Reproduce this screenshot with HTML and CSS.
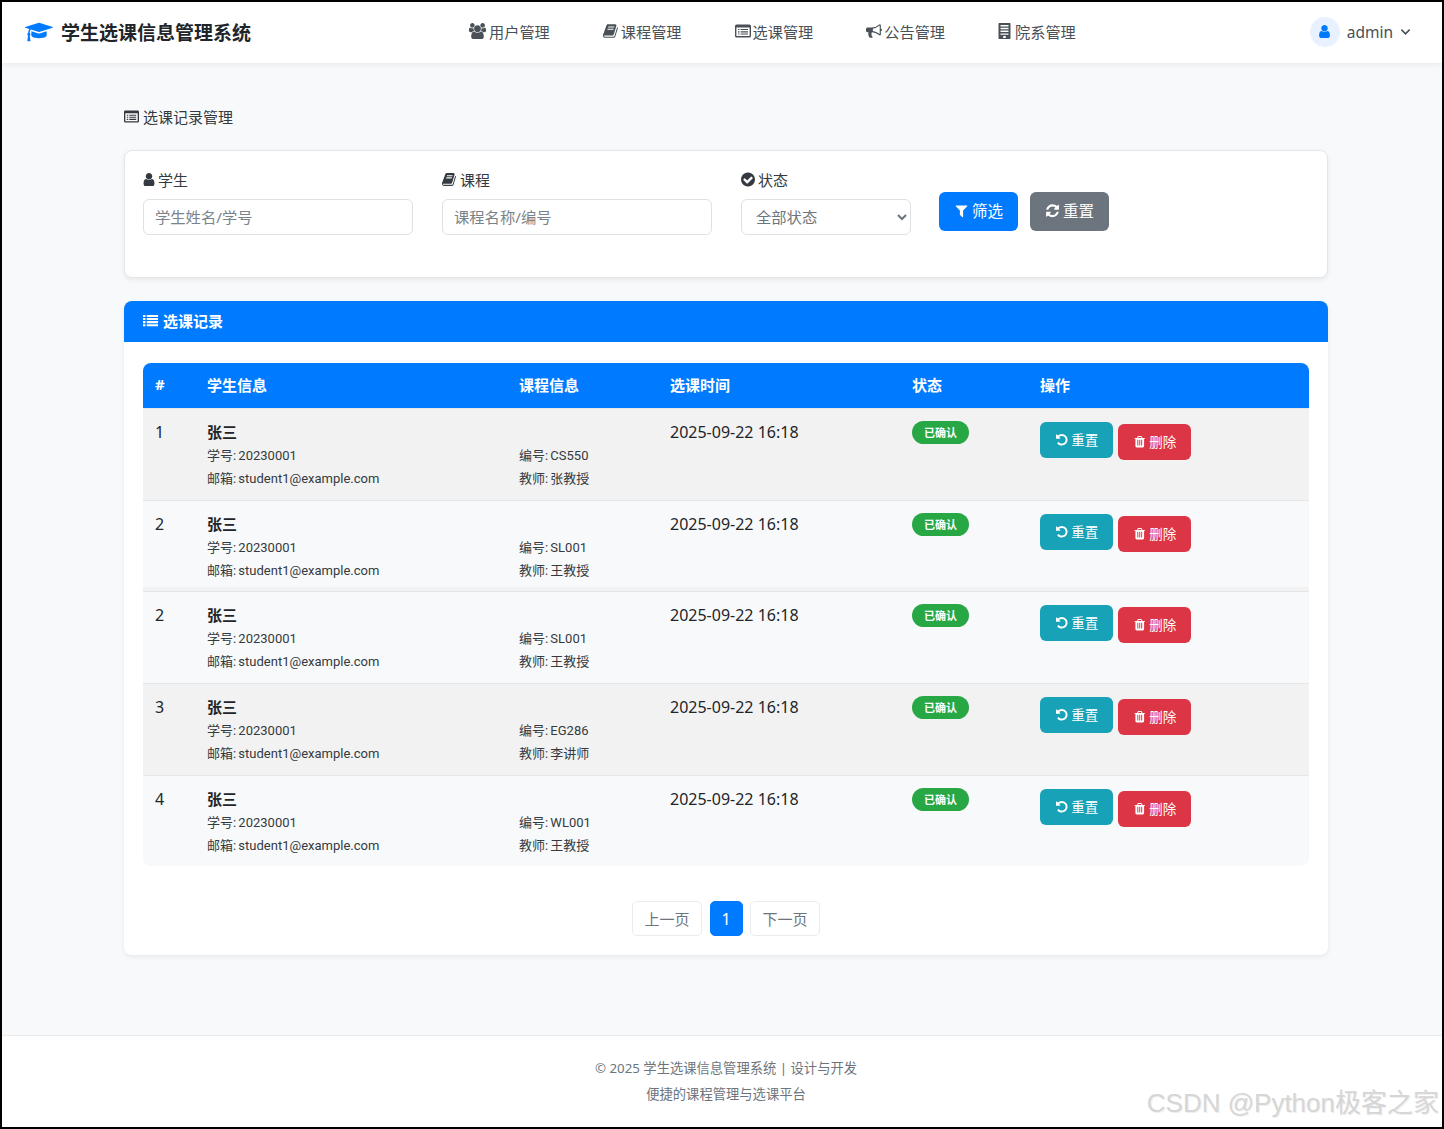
FILE: index.html
```html
<!DOCTYPE html>
<html lang="zh-CN">
<head>
    <meta charset="UTF-8">
    <title>学生选课信息管理系统</title>
    <link rel="stylesheet" href="styles.css">
</head>
<body>
    <!-- icon set, reused below with <use> -->
    <svg class="sprite" aria-hidden="true">
        <symbol id="i-cap" viewBox="0 0 2304 1792"><path d="M1774 836l18 316q4 69-82 128t-235 93.5-323 34.5-323-34.5-235-93.5-82-128l18-316 574 181q22 7 48 7t48-7zm530-324q0 23-22 31l-1120 352q-4 1-10 1t-10-1l-652-206q-43 34-71 111.5t-34 178.5q63 36 63 109 0 69-58 107l58 433q2 14-8 25-9 11-24 11h-192q-15 0-24-11-10-11-8-25l58-433q-58-38-58-107 0-73 65-111 11-207 98-330l-333-104q-22-8-22-31t22-31l1120-352q4-1 10-1t10 1l1120 352q22 8 22 31z"/></symbol>
        <symbol id="i-users" viewBox="0 0 1920 1792"><path d="M593 896q-162 5-265 128h-134q-82 0-138-40.5t-56-118.5q0-353 124-353 6 0 43.5 21t97.5 42.5 119 21.5q67 0 133-23-5 37-5 66 0 139 81 256zm1071 637q0 120-73 189.5t-194 69.5h-874q-121 0-194-69.5t-73-189.5q0-53 3.5-103.5t14-109 26.5-108.5 43-97.5 62-81 85.5-53.5 111.5-20q10 0 43 21.5t73 48 107 48 135 21.5 135-21.5 107-48 73-48 43-21.5q61 0 111.5 20t85.5 53.5 62 81 43 97.5 26.5 108.5 14 109 3.5 103.5zm-1024-1277q0 106-75 181t-181 75-181-75-75-181 75-181 181-75 181 75 75 181zm704 384q0 159-112.5 271.5t-271.5 112.5-271.5-112.5-112.5-271.5 112.5-271.5 271.5-112.5 271.5 112.5 112.5 271.5zm576 225q0 78-56 118.5t-138 40.5h-134q-103-123-265-128 81-117 81-256 0-29-5-66 66 23 133 23 59 0 119-21.5t97.5-42.5 43.5-21q124 0 124 353zm-128-609q0 106-75 181t-181 75-181-75-75-181 75-181 181-75 181 75 75 181z"/></symbol>
        <symbol id="i-book" viewBox="0 0 1792 1792"><path d="M1639 478q40 57 18 129l-275 906q-19 64-76.5 107.5t-122.5 43.5h-923q-77 0-148.5-53.5t-99.5-131.5q-24-67-2-127 0-4 3-27t4-37q1-8-3-21.5t-3-19.5q2-11 8-21t16.5-23.5 16.5-23.5q23-38 45-91.5t30-91.5q3-10 .5-30t-.5-28q3-11 17-28t17-23q21-36 42-92t25-90q1-9-2.5-32t.5-28q4-13 22-30.5t22-22.5q19-26 42.5-84.5t27.5-96.5q1-8-3-25.5t-2-26.5q2-8 9-18t18-23 17-21q8-12 16.5-30.5t15-35 16-36 19.5-32 26.5-23.5 36-11.5 47.5 5.5l-1 3q38-9 51-9h761q74 0 114 56t18 130l-274 906q-36 119-71.5 153.5t-128.5 34.5h-869q-27 0-38 15-11 16-1 43 24 70 144 70h923q29 0 56-15.5t35-41.5l300-987q7-22 5-57 38 15 59 43zm-1064 2q-4 13 2 22.5t20 9.5h608q13 0 25.5-9.5t16.5-22.5l21-64q4-13-2-22.5t-20-9.5h-608q-13 0-25.5 9.5t-16.5 22.5zm-83 256q-4 13 2 22.5t20 9.5h608q13 0 25.5-9.5t16.5-22.5l21-64q4-13-2-22.5t-20-9.5h-608q-13 0-25.5 9.5t-16.5 22.5z"/></symbol>
        <symbol id="i-listalt" viewBox="0 0 16 16"><path fill-rule="evenodd" d="M1.5 1.5h13A1.5 1.5 0 0 1 16 3v10a1.5 1.5 0 0 1-1.5 1.5h-13A1.5 1.5 0 0 1 0 13V3a1.5 1.5 0 0 1 1.5-1.5zM1.4 4.6v8.2c0 .2.1.3.3.3h12.6c.2 0 .3-.1.3-.3V4.6zM3 6h1.5v1.1H3zm2.600 0H13v1.1H5.600zM3 8.300h1.5v1.1H3zm2.600 0H13v1.1H5.600zM3 10.500h1.5v1.1H3zm2.600 0H13v1.1H5.600z"/></symbol>
        <symbol id="i-bullhorn" viewBox="0 0 1792 1792"><path d="M1664 640q53 0 90.5 37.5t37.5 90.5-37.5 90.5-90.5 37.5v384q0 52-38 90t-90 38q-417-347-812-380-58 19-91 66t-31 100.5 40 92.5q-20 33-23 65.5t6 58 33.5 55 48 50 61.5 50.5q-29 58-111.5 83t-168.5 11.5-132-55.5q-7-23-29.5-87.5t-32-94.5-23-89-15-101 3.5-98.5 22-110.5h-122q-66 0-113-47t-47-113v-192q0-66 47-113t113-47h480q435 0 896-384 52 0 90 38t38 90v384zm-128 604v-954q-394 302-768 343v270q377 42 768 341z"/></symbol>
        <symbol id="i-building" viewBox="0 0 12 16"><path fill-rule="evenodd" d="M.7 0h10.600c.4 0 .7.3.7.7v14.600c0 .4-.3.7-.7.7H.7c-.4 0-.7-.3-.7-.7V.7C0 .3.3 0 .7 0zM2 2v1.400h8V2zm0 2.800v1.400h8V4.800zm0 2.800V9h8V7.600zm0 2.800v1.400h8v-1.400zM4.700 13v2h2.600v-2z"/></symbol>
        <symbol id="i-user" viewBox="192 128 1408 1536"><path d="M1536 1399q0 109-62.5 187t-150.5 78h-854q-88 0-150.5-78t-62.5-187q0-85 8.5-160.5t31.5-152 58.5-131 94-89 134.5-34.5q131 128 313 128t313-128q76 0 134.5 34.5t94 89 58.5 131 31.5 152 8.5 160.5zm-256-887q0 159-112.5 271.5t-271.5 112.5-271.5-112.5-112.5-271.5 112.5-271.5 271.5-112.5 271.5 112.5 112.5 271.5z"/></symbol>
        <symbol id="i-check" viewBox="128 128 1536 1536"><path d="M1412 734q0-28-18-46l-91-90q-19-19-45-19t-45 19l-408 407-226-226q-19-19-45-19t-45 19l-91 90q-18 18-18 46 0 27 18 45l362 362q19 19 45 19 27 0 46-19l543-543q18-18 18-45zm252 162q0 209-103 385.5t-279.5 279.5-385.5 103-385.5-103-279.5-279.5-103-385.5 103-385.5 279.5-279.5 385.5-103 385.5 103 279.5 279.5 103 385.5z"/></symbol>
        <symbol id="i-filter" viewBox="0 0 1792 1792"><path d="M1595 295q17 41-14 70l-493 493v742q0 42-39 59-13 5-25 5-27 0-45-19l-256-256q-19-19-19-45v-486l-493-493q-31-29-14-70 17-39 59-39h1280q42 0 59 39z"/></symbol>
        <symbol id="i-refresh" viewBox="0 0 1792 1792"><path d="M1639 1056q0 5-1 7-64 268-268 434.5t-478 166.5q-146 0-282.5-55t-243.5-157l-129 129q-19 19-45 19t-45-19-19-45v-448q0-26 19-45t45-19h448q26 0 45 19t19 45-19 45l-137 137q71 66 161 102t187 36q134 0 250-65t186-179q11-17 53-117 8-23 30-23h192q13 0 22.5 9.5t9.5 22.5zm25-800v448q0 26-19 45t-45 19h-448q-26 0-45-19t-19-45 19-45l138-138q-148-137-349-137-134 0-250 65t-186 179q-11 17-53 117-8 23-30 23h-199q-13 0-22.5-9.5t-9.5-22.5v-7q65-268 270-434.5t480-166.5q146 0 284 55.5t245 156.5l130-129q19-19 45-19t45 19 19 45z"/></symbol>
        <symbol id="i-list" viewBox="0 0 16 16"><path d="M0 2h2.600v2.200H0zM4 2h12v2.200H4zM0 5.300h2.600v2.200H0zM4 5.300h12v2.200H4zM0 8.600h2.600v2.200H0zM4 8.600h12v2.200H4zM0 11.900h2.600v2.200H0zM4 11.900h12v2.200H4z"/></symbol>
        <symbol id="i-undo" viewBox="0 0 1792 1792"><path d="M1664 896q0 156-61 298t-164 245-245 164-298 61q-172 0-327-72.5t-264-204.5q-7-10-6.5-22.5t8.5-20.5l137-138q10-9 25-9 16 2 23 12 73 95 179 147t225 52q104 0 198.5-40.5t163.5-109.5 109.5-163.5 40.5-198.5-40.5-198.5-109.5-163.5-163.5-109.5-198.5-40.5q-98 0-188 35.5t-160 101.5l137 138q31 30 14 69-17 40-59 40h-448q-26 0-45-19t-19-45v-448q0-42 40-59 39-17 69 14l130 129q107-101 244.5-156.5t284.5-55.5q156 0 298 61t245 164 164 245 61 298z"/></symbol>
        <symbol id="i-trash" viewBox="0 0 1792 1792"><path d="M704 1376v-704q0-14-9-23t-23-9h-64q-14 0-23 9t-9 23v704q0 14 9 23t23 9h64q14 0 23-9t9-23zm256 0v-704q0-14-9-23t-23-9h-64q-14 0-23 9t-9 23v704q0 14 9 23t23 9h64q14 0 23-9t9-23zm256 0v-704q0-14-9-23t-23-9h-64q-14 0-23 9t-9 23v704q0 14 9 23t23 9h64q14 0 23-9t9-23zm-544-992h448l-48-117q-7-9-17-11h-317q-10 2-17 11zm928 32v64q0 14-9 23t-23 9h-96v948q0 83-47 143.5t-113 60.5h-832q-66 0-113-58.5t-47-141.5v-952h-96q-14 0-23-9t-9-23v-64q0-14 9-23t23-9h309l70-167q15-37 54-63t79-26h320q40 0 79 26t54 63l70 167h309q14 0 23 9t9 23z"/></symbol>
    </svg>

    <div class="page">
        <!-- Top navigation -->
        <header class="navbar">
            <a class="brand" href="#">
                <svg class="brand-icon"><use href="#i-cap"/></svg>
                <span>学生选课信息管理系统</span>
            </a>
            <nav class="nav-links">
                <a href="#"><svg class="icon icon-wide"><use href="#i-users"/></svg>用户管理</a>
                <a href="#"><svg class="icon"><use href="#i-book"/></svg>课程管理</a>
                <a href="#"><svg class="icon"><use href="#i-listalt"/></svg>选课管理</a>
                <a href="#"><svg class="icon"><use href="#i-bullhorn"/></svg>公告管理</a>
                <a href="#"><svg class="icon icon-narrow"><use href="#i-building"/></svg>院系管理</a>
            </nav>
            <div class="user-menu">
                <span class="avatar"><svg class="icon"><use href="#i-user"/></svg></span>
                <span class="user-name">admin</span>
                <svg class="chevron" viewBox="0 0 12 8"><path d="M1.5 1.5 6 6l4.500-4.500"/></svg>
            </div>
        </header>

        <main class="content">
            <h1 class="page-title"><svg class="icon"><use href="#i-listalt"/></svg>选课记录管理</h1>

            <!-- Filter form -->
            <form class="card filter-card">
                <div class="field field-wide">
                    <label><svg class="icon icon-user"><use href="#i-user"/></svg>学生</label>
                    <input type="text" placeholder="学生姓名/学号">
                </div>
                <div class="field field-wide">
                    <label><svg class="icon"><use href="#i-book"/></svg>课程</label>
                    <input type="text" placeholder="课程名称/编号">
                </div>
                <div class="field field-small">
                    <label><svg class="icon icon-check"><use href="#i-check"/></svg>状态</label>
                    <select><option>全部状态</option></select>
                </div>
                <div class="filter-actions">
                    <button type="button" class="btn btn-blue"><svg class="icon"><use href="#i-filter"/></svg>筛选</button>
                    <button type="button" class="btn btn-gray"><svg class="icon"><use href="#i-refresh"/></svg>重置</button>
                </div>
            </form>

            <!-- Records table -->
            <section class="card records-card">
                <h2 class="records-head"><svg class="icon"><use href="#i-list"/></svg>选课记录</h2>
                <div class="records-body">
                    <div class="table-wrap">
                        <table class="records">
                            <colgroup>
                                <col class="col-id"><col class="col-student"><col class="col-course">
                                <col class="col-time"><col class="col-status"><col class="col-ops">
                            </colgroup>
                            <thead>
                                <tr><th>#</th><th>学生信息</th><th>课程信息</th><th>选课时间</th><th>状态</th><th>操作</th></tr>
                            </thead>
                            <tbody>
                                <tr class="row-gray row-tall">
                                    <td class="plain">1</td>
                                    <td><div class="name">张三</div><div class="sub">学号: 20230001</div><div class="sub">邮箱: student1@example.com</div></td>
                                    <td><div class="name"></div><div class="sub">编号: CS550</div><div class="sub">教师: 张教授</div></td>
                                    <td class="plain">2025-09-22 16:18</td>
                                    <td><span class="badge">已确认</span></td>
                                    <td><div class="ops"><a class="btn-sm btn-teal" href="#"><svg class="icon"><use href="#i-undo"/></svg>重置</a><a class="btn-sm btn-red" href="#"><svg class="icon"><use href="#i-trash"/></svg>删除</a></div></td>
                                </tr>
                                <tr class="row-band">
                                    <td class="plain">2</td>
                                    <td><div class="name">张三</div><div class="sub">学号: 20230001</div><div class="sub">邮箱: student1@example.com</div></td>
                                    <td><div class="name"></div><div class="sub">编号: SL001</div><div class="sub">教师: 王教授</div></td>
                                    <td class="plain">2025-09-22 16:18</td>
                                    <td><span class="badge">已确认</span></td>
                                    <td><div class="ops"><a class="btn-sm btn-teal" href="#"><svg class="icon"><use href="#i-undo"/></svg>重置</a><a class="btn-sm btn-red" href="#"><svg class="icon"><use href="#i-trash"/></svg>删除</a></div></td>
                                </tr>
                                <tr class="row-tall">
                                    <td class="plain">2</td>
                                    <td><div class="name">张三</div><div class="sub">学号: 20230001</div><div class="sub">邮箱: student1@example.com</div></td>
                                    <td><div class="name"></div><div class="sub">编号: SL001</div><div class="sub">教师: 王教授</div></td>
                                    <td class="plain">2025-09-22 16:18</td>
                                    <td><span class="badge">已确认</span></td>
                                    <td><div class="ops"><a class="btn-sm btn-teal" href="#"><svg class="icon"><use href="#i-undo"/></svg>重置</a><a class="btn-sm btn-red" href="#"><svg class="icon"><use href="#i-trash"/></svg>删除</a></div></td>
                                </tr>
                                <tr class="row-gray row-tall">
                                    <td class="plain">3</td>
                                    <td><div class="name">张三</div><div class="sub">学号: 20230001</div><div class="sub">邮箱: student1@example.com</div></td>
                                    <td><div class="name"></div><div class="sub">编号: EG286</div><div class="sub">教师: 李讲师</div></td>
                                    <td class="plain">2025-09-22 16:18</td>
                                    <td><span class="badge">已确认</span></td>
                                    <td><div class="ops"><a class="btn-sm btn-teal" href="#"><svg class="icon"><use href="#i-undo"/></svg>重置</a><a class="btn-sm btn-red" href="#"><svg class="icon"><use href="#i-trash"/></svg>删除</a></div></td>
                                </tr>
                                <tr>
                                    <td class="plain">4</td>
                                    <td><div class="name">张三</div><div class="sub">学号: 20230001</div><div class="sub">邮箱: student1@example.com</div></td>
                                    <td><div class="name"></div><div class="sub">编号: WL001</div><div class="sub">教师: 王教授</div></td>
                                    <td class="plain">2025-09-22 16:18</td>
                                    <td><span class="badge">已确认</span></td>
                                    <td><div class="ops"><a class="btn-sm btn-teal" href="#"><svg class="icon"><use href="#i-undo"/></svg>重置</a><a class="btn-sm btn-red" href="#"><svg class="icon"><use href="#i-trash"/></svg>删除</a></div></td>
                                </tr>
                            </tbody>
                        </table>
                    </div>

                    <div class="pager">
                        <a href="#">上一页</a>
                        <a href="#" class="current">1</a>
                        <a href="#">下一页</a>
                    </div>
                </div>
            </section>
        </main>

        <footer class="footer">
            <p>© 2025 学生选课信息管理系统 | 设计与开发</p>
            <p>便捷的课程管理与选课平台</p>
        </footer>

        <div class="watermark">CSDN @Python极客之家</div>
    </div>
</body>
</html>
```

FILE: styles.css
```css
* {
    box-sizing: border-box;
}

body {
    margin: 0;
    font-family: "Noto Sans", "Noto Sans CJK SC", sans-serif;
    font-size: 15px;
    color: #212529;
    background-color: #f8f9fa;
}

a {
    text-decoration: none;
}

.sprite {
    display: none;
}

.icon {
    width: 1em;
    height: 1em;
    fill: currentColor;
    flex: none;
}

.page {
    position: relative;
    display: flex;
    flex-direction: column;
    height: 1129px;
    border: 2px solid #000;
    overflow: hidden;
}

/* navbar */
.navbar {
    display: flex;
    align-items: center;
    height: 61px;
    padding: 0 31px 2px 23px;
    background-color: #fff;
    box-shadow: 0 2px 6px rgba(0, 0, 0, 0.06);
}

.brand {
    display: flex;
    align-items: center;
    gap: 8px;
    font-size: 19px;
    font-weight: 700;
    color: #212529;
}

.brand-icon {
    width: 28px;
    height: 22px;
    fill: #007bff;
}

.nav-links {
    display: flex;
    gap: 53px;
    margin-left: 217px;
}

.nav-links a {
    display: flex;
    align-items: center;
    gap: 2px;
    padding-bottom: 2px;
    color: #495057;
    font-size: 15.2px;
}

.nav-links .icon {
    width: 16px;
    height: 16px;
}

.nav-links .icon-wide {
    width: 19px;
}

.nav-links .icon-narrow {
    width: 13px;
    margin-right: 2px;
}

.user-menu {
    display: flex;
    align-items: center;
    margin-left: auto;
    color: #495057;
}

.avatar {
    display: flex;
    align-items: center;
    justify-content: center;
    width: 30px;
    height: 30px;
    margin-right: 7px;
    border-radius: 50%;
    background-color: #e7f1ff;
    color: #007bff;
    font-size: 13px;
}

.user-name {
    font-size: 15.5px;
}

.chevron {
    width: 11px;
    height: 8px;
    margin-left: 7px;
    fill: none;
    stroke: #495057;
    stroke-width: 1.8;
}

/* main area */
.content {
    flex: 1;
    padding: 41px 114px 0 122px;
}

.page-title {
    display: flex;
    align-items: center;
    gap: 4px;
    height: 24px;
    margin: 0 0 22px;
    font-size: 15px;
    font-weight: 400;
    color: #343a40;
}

.card {
    background-color: #fff;
    border: 1px solid #e4e7ea;
    border-radius: 8px;
    box-shadow: 0 2px 5px rgba(0, 0, 0, 0.07);
}

/* filter form */
.filter-card {
    display: flex;
    align-items: flex-start;
    height: 128px;
    padding: 20px 18px 0;
}

.field {
    margin-right: 29px;
}

.field-wide {
    width: 270px;
}

.field-small {
    width: 170px;
    margin-right: 28px;
}

.field label {
    display: flex;
    align-items: center;
    gap: 3px;
    height: 17px;
    margin-bottom: 11px;
    font-size: 15px;
    color: #343a40;
}

.field .icon-user {
    width: 12px;
}

.field .icon-check {
    width: 14px;
}

.field input,
.field select {
    width: 100%;
    height: 36px;
    border: 1px solid #dee2e6;
    border-radius: 6px;
    background-color: #fff;
    font-family: inherit;
    font-size: 15.3px;
    color: #6c757d;
}

.field input {
    padding: 0 11px;
}

.field input::placeholder {
    color: #7b838a;
}

.field select {
    padding: 0 0 0 10px;
}

.filter-actions {
    display: flex;
    gap: 12px;
    margin-top: 21px;
}

.btn {
    display: flex;
    align-items: center;
    gap: 3px;
    height: 39px;
    padding: 0 14px 2px;
    border: 1px solid transparent;
    border-radius: 6px;
    font-family: inherit;
    font-size: 15.5px;
    color: #fff;
}

.btn .icon {
    width: 15px;
}

.btn-blue {
    background-color: #007bff;
}

.btn-gray {
    background-color: #6c757d;
}

/* records card */
.records-card {
    height: 654px;
    margin-top: 23px;
    border: none;
    overflow: hidden;
}

.records-head {
    display: flex;
    align-items: center;
    gap: 5px;
    height: 41px;
    margin: 0;
    padding: 0 19px 2px;
    background-color: #007bff;
    color: #fff;
    font-size: 15px;
    font-weight: 700;
}

.records-body {
    padding: 21px 19px 0;
}

.table-wrap {
    border-radius: 8px;
    overflow: hidden;
}

.records {
    width: 100%;
    border-collapse: collapse;
    table-layout: fixed;
}

.col-id { width: 52px; }
.col-student { width: 312px; }
.col-course { width: 151px; }
.col-time { width: 242px; }
.col-status { width: 128px; }

.records th {
    height: 45px;
    padding: 0 12px 2px;
    background-color: #007bff;
    color: #fff;
    font-size: 15px;
    font-weight: 700;
    text-align: left;
}

.records td {
    height: 91px;
    padding: 11px 12px 0;
    background-color: #f8f9fa;
    border-top: 1px solid #e4e7ea;
    color: #212529;
    vertical-align: top;
    line-height: 24px;
}

.records .row-tall td {
    height: 92px;
}

.records td.plain {
    font-size: 16px;
}

.records .row-gray td {
    background-color: #f2f2f2;
}

.records .row-band td {
    box-shadow: inset 0 -4px 0 #f2f2f2;
}

.name {
    height: 24px;
    font-weight: 700;
}

.sub {
    height: 23px;
    font-family: Roboto, "Noto Sans CJK SC", sans-serif;
    font-size: 13px;
    line-height: 23px;
    word-spacing: -1px;
    color: #343a40;
}

.badge {
    display: inline-block;
    width: 57px;
    height: 23px;
    margin-top: 1px;
    border-radius: 12px;
    background-color: #28a745;
    color: #fff;
    font-size: 11px;
    font-weight: 700;
    line-height: 23px;
    text-align: center;
    vertical-align: top;
}

.ops {
    display: flex;
    align-items: flex-start;
    gap: 5px;
}

.btn-sm {
    display: flex;
    align-items: center;
    justify-content: center;
    gap: 3px;
    width: 73px;
    height: 36px;
    border-radius: 6px;
    color: #fff;
    font-size: 13.5px;
}

.btn-teal {
    margin-top: 2px;
    background-color: #17a2b8;
}

.btn-red {
    margin-top: 4px;
    background-color: #dc3545;
}

/* pagination */
.pager {
    display: flex;
    justify-content: center;
    gap: 7.5px;
    margin-top: 35px;
}

.pager a {
    display: flex;
    align-items: center;
    justify-content: center;
    width: 70px;
    height: 35px;
    border: 1px solid #e9ecef;
    border-radius: 5px;
    color: #6c757d;
    font-size: 15px;
}

.pager a.current {
    width: 33px;
    border-color: #007bff;
    background-color: #007bff;
    color: #fff;
    font-size: 16px;
}

/* footer */
.footer {
    height: 92px;
    padding: 22px 0 0 8px;
    background-color: #fff;
    border-top: 1px solid #e9ecef;
    color: #6c757d;
    font-size: 13.3px;
    text-align: center;
}

.footer p {
    margin: 0 0 6px;
    line-height: 20px;
}

.watermark {
    position: absolute;
    right: 3px;
    bottom: 8px;
    font-family: "Liberation Sans", "Noto Sans CJK SC", sans-serif;
    font-size: 26px;
    color: #d6d6d6;
    text-shadow: 1px 1px 0 #efefef;
}
```
